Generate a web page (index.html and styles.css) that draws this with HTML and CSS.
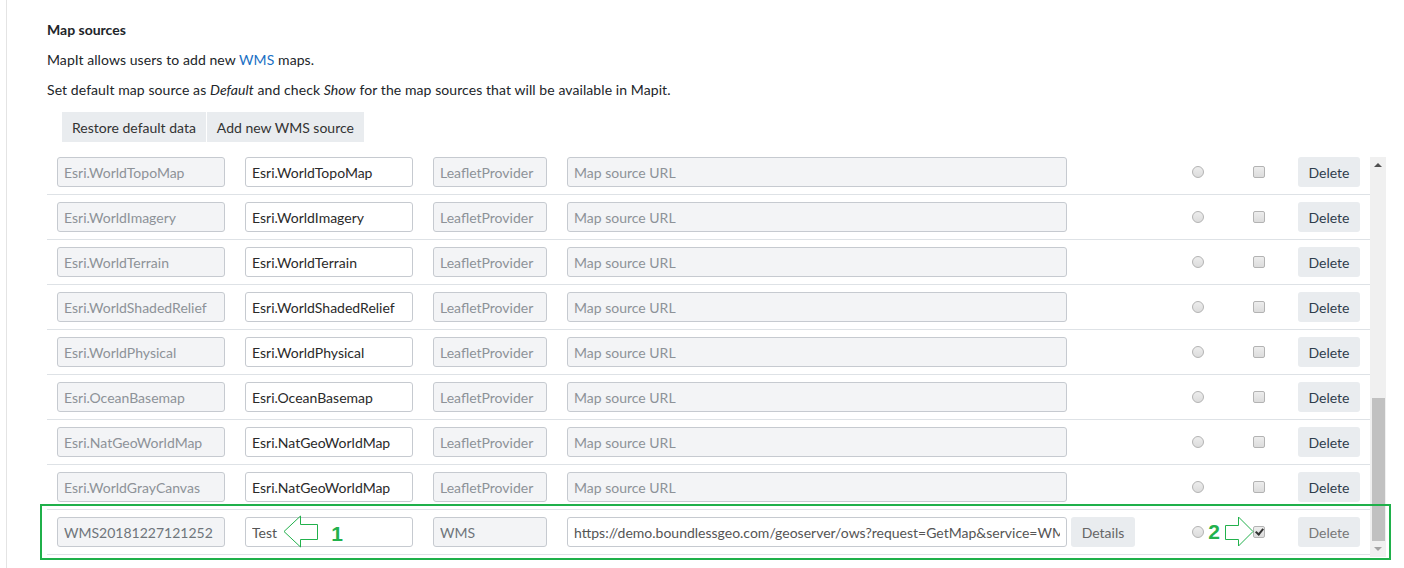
FILE: index.html
```html
<!DOCTYPE html>
<html lang="en">
<head>
    <meta charset="UTF-8">
    <meta name="viewport" content="width=device-width, initial-scale=1.0">
    <title>Map sources</title>
    <link rel="stylesheet" href="styles.css">
</head>
<body>

<div class="page">
    <h4 class="title">Map sources</h4>
    <p class="text">MapIt allows users to add new <a href="#" class="link">WMS</a> maps.</p>
    <p class="text">Set default map source as <em>Default</em> and check <em>Show</em> for the map sources that will be available in Mapit.</p>

    <div class="toolbar">
        <button type="button" class="tool-btn">Restore default data</button>
        <button type="button" class="tool-btn">Add new WMS source</button>
    </div>

    <div class="sources">
        <div class="list">
            <div class="list-inner">
                <div class="row">
                    <input class="field f-id locked" type="text" value="Esri.WorldTopoMap" disabled>
                    <input class="field f-name" type="text" value="Esri.WorldTopoMap">
                    <input class="field f-type locked" type="text" value="LeafletProvider" disabled>
                    <input class="field f-url locked" type="text" placeholder="Map source URL" disabled>
                    <span class="details-slot"></span>
                    <input class="radio" type="radio" name="default">
                    <input class="check" type="checkbox">
                    <button type="button" class="delete-btn">Delete</button>
                </div>
                <div class="row">
                    <input class="field f-id locked" type="text" value="Esri.WorldImagery" disabled>
                    <input class="field f-name" type="text" value="Esri.WorldImagery">
                    <input class="field f-type locked" type="text" value="LeafletProvider" disabled>
                    <input class="field f-url locked" type="text" placeholder="Map source URL" disabled>
                    <span class="details-slot"></span>
                    <input class="radio" type="radio" name="default">
                    <input class="check" type="checkbox">
                    <button type="button" class="delete-btn">Delete</button>
                </div>
                <div class="row">
                    <input class="field f-id locked" type="text" value="Esri.WorldTerrain" disabled>
                    <input class="field f-name" type="text" value="Esri.WorldTerrain">
                    <input class="field f-type locked" type="text" value="LeafletProvider" disabled>
                    <input class="field f-url locked" type="text" placeholder="Map source URL" disabled>
                    <span class="details-slot"></span>
                    <input class="radio" type="radio" name="default">
                    <input class="check" type="checkbox">
                    <button type="button" class="delete-btn">Delete</button>
                </div>
                <div class="row">
                    <input class="field f-id locked" type="text" value="Esri.WorldShadedRelief" disabled>
                    <input class="field f-name" type="text" value="Esri.WorldShadedRelief">
                    <input class="field f-type locked" type="text" value="LeafletProvider" disabled>
                    <input class="field f-url locked" type="text" placeholder="Map source URL" disabled>
                    <span class="details-slot"></span>
                    <input class="radio" type="radio" name="default">
                    <input class="check" type="checkbox">
                    <button type="button" class="delete-btn">Delete</button>
                </div>
                <div class="row">
                    <input class="field f-id locked" type="text" value="Esri.WorldPhysical" disabled>
                    <input class="field f-name" type="text" value="Esri.WorldPhysical">
                    <input class="field f-type locked" type="text" value="LeafletProvider" disabled>
                    <input class="field f-url locked" type="text" placeholder="Map source URL" disabled>
                    <span class="details-slot"></span>
                    <input class="radio" type="radio" name="default">
                    <input class="check" type="checkbox">
                    <button type="button" class="delete-btn">Delete</button>
                </div>
                <div class="row">
                    <input class="field f-id locked" type="text" value="Esri.OceanBasemap" disabled>
                    <input class="field f-name" type="text" value="Esri.OceanBasemap">
                    <input class="field f-type locked" type="text" value="LeafletProvider" disabled>
                    <input class="field f-url locked" type="text" placeholder="Map source URL" disabled>
                    <span class="details-slot"></span>
                    <input class="radio" type="radio" name="default">
                    <input class="check" type="checkbox">
                    <button type="button" class="delete-btn">Delete</button>
                </div>
                <div class="row">
                    <input class="field f-id locked" type="text" value="Esri.NatGeoWorldMap" disabled>
                    <input class="field f-name" type="text" value="Esri.NatGeoWorldMap">
                    <input class="field f-type locked" type="text" value="LeafletProvider" disabled>
                    <input class="field f-url locked" type="text" placeholder="Map source URL" disabled>
                    <span class="details-slot"></span>
                    <input class="radio" type="radio" name="default">
                    <input class="check" type="checkbox">
                    <button type="button" class="delete-btn">Delete</button>
                </div>
                <div class="row">
                    <input class="field f-id locked" type="text" value="Esri.WorldGrayCanvas" disabled>
                    <input class="field f-name" type="text" value="Esri.NatGeoWorldMap">
                    <input class="field f-type locked" type="text" value="LeafletProvider" disabled>
                    <input class="field f-url locked" type="text" placeholder="Map source URL" disabled>
                    <span class="details-slot"></span>
                    <input class="radio" type="radio" name="default">
                    <input class="check" type="checkbox">
                    <button type="button" class="delete-btn">Delete</button>
                </div>
                <div class="row row-wms">
                    <input class="field f-id locked" type="text" value="WMS20181227121252" disabled>
                    <input class="field f-name" type="text" value="Test">
                    <input class="field f-type locked" type="text" value="WMS" disabled>
                    <input class="field f-url" type="text" value="https://demo.boundlessgeo.com/geoserver/ows?request=GetMap&amp;service=WMS">
                    <span class="details-slot"><button type="button" class="details-btn">Details</button></span>
                    <input class="radio" type="radio" name="default">
                    <input class="check" type="checkbox" checked>
                    <button type="button" class="delete-btn muted">Delete</button>
                </div>
            </div>
        </div>

        <div class="scrollbar">
            <div class="sb-arrow"><span class="tri-up"></span></div>
            <div class="sb-track"><div class="sb-thumb"></div></div>
            <div class="sb-arrow"><span class="tri-down"></span></div>
        </div>

        <!-- annotation over the last row -->
        <svg class="note" width="1351" height="56" viewBox="0 0 1351 56">
            <rect x="1" y="1" width="1349" height="54" fill="none" stroke="#1fb04a" stroke-width="2"/>
            <polygon points="244,27.5 260.5,12 260.5,20.5 277.5,20.5 277.5,35.5 260.5,35.5 260.5,43" fill="none" stroke="#22b14c" stroke-width="1"/>
            <text x="297" y="37" class="note-num" text-anchor="middle">1</text>
            <text x="1174" y="35" class="note-num" text-anchor="middle">2</text>
            <polygon points="1185.5,21.5 1198.5,21.5 1198.5,13 1213,27.5 1198.5,42 1198.5,35.5 1185.5,35.5" fill="none" stroke="#22b14c" stroke-width="1"/>
        </svg>
    </div>
</div>

</body>
</html>
```

FILE: styles.css
```css
body {
    font-family: Lato, "Open Sans", sans-serif;
    font-size: 14px;
    color: #212529;
    background-color: #fff;
    margin: 0;
}
.page {
    margin-left: 6px;
    border-left: 1px solid #e4e4e4;
    padding: 20px 18px 0 40px;
    height: 548px;
}
.title {
    margin: 0 0 10px;
    font-size: 14px;
    line-height: 20px;
    font-weight: bold;
}
.text {
    margin: 0 0 10px;
    line-height: 20px;
    letter-spacing: 0.08px;
}
.link {
    color: #1a6fc4;
    text-decoration: none;
}
.toolbar {
    display: flex;
    gap: 1px;
    margin-top: 12px;
    padding-left: 15px;
}
.tool-btn {
    height: 30px;
    padding: 0 10px;
    border: none;
    background-color: #e9ecef;
    color: #333;
    font-family: inherit;
    font-size: 14px;
}
.sources {
    position: relative;
    display: flex;
    height: 400px;
    margin-top: 15px;
}
.list {
    flex: 1;
    overflow: hidden;
}
.list-inner {
    margin-top: -7px;
}
.row {
    display: flex;
    align-items: center;
    height: 45px;
    box-sizing: border-box;
    padding: 7px 0 7px 10px;
    border-bottom: 1px solid #dee2e6;
}
.field {
    box-sizing: border-box;
    height: 30px;
    padding: 0 6px;
    margin: 0 20px 0 0;
    border: 1px solid #c6cad0;
    border-radius: 3px;
    background-color: #fff;
    color: #2a2a2a;
    font-family: inherit;
    font-size: 14px;
}
.field.locked {
    background-color: #f3f4f6;
    color: #8d9298;
}
.field::placeholder {
    color: #8d9298;
}
.f-id, .f-name {
    width: 168px;
}
.f-type {
    width: 114px;
}
.f-url {
    width: 500px;
    margin-right: 0;
}
.row-wms .f-id, .row-wms .f-type {
    color: #6f757b;
}
.row-wms .f-name, .row-wms .f-url {
    color: #555;
}
.details-slot {
    display: flex;
    width: 68px;
    justify-content: flex-end;
}
.details-btn {
    width: 64px;
    height: 30px;
    border: none;
    border-radius: 3px;
    background-color: #e9ecef;
    color: #666;
    font-family: inherit;
    font-size: 14px;
}
.radio, .check {
    appearance: none;
    -webkit-appearance: none;
    box-sizing: border-box;
    width: 12px;
    height: 12px;
    margin: 0;
    border: 1px solid #b3b3b3;
    background: linear-gradient(#ededed, #dcdcdc);
}
.radio {
    margin-left: 57px;
    border-radius: 50%;
}
.check {
    position: relative;
    margin-left: 49px;
    border-radius: 2px;
}
.check:checked::after {
    content: "";
    position: absolute;
    left: 3px;
    top: 0;
    width: 3px;
    height: 6px;
    border-right: 2px solid #333;
    border-bottom: 2px solid #333;
    transform: rotate(40deg);
}
.delete-btn {
    width: 62px;
    height: 30px;
    margin-left: 33px;
    border: none;
    border-radius: 3px;
    background-color: #e9ecef;
    color: #2f3d4c;
    font-family: inherit;
    font-size: 14px;
}
.delete-btn.muted {
    color: #777;
}
.scrollbar {
    display: flex;
    flex-direction: column;
    width: 16px;
    background-color: #f0f0f0;
}
.sb-arrow {
    display: flex;
    height: 16px;
    align-items: center;
    justify-content: center;
}
.tri-up {
    border-left: 4px solid transparent;
    border-right: 4px solid transparent;
    border-bottom: 4px solid #505050;
}
.tri-down {
    border-left: 4px solid transparent;
    border-right: 4px solid transparent;
    border-top: 4px solid #a3a3a3;
}
.sb-track {
    flex: 1;
    display: flex;
    flex-direction: column;
    justify-content: flex-end;
}
.sb-thumb {
    height: 143px;
    margin: 0 1px 0 2px;
    background-color: #c1c1c1;
}
.note {
    position: absolute;
    left: -7px;
    top: 347px;
    overflow: visible;
    pointer-events: none;
}
.note-num {
    font-family: "Liberation Sans", Arial, sans-serif;
    font-size: 21px;
    font-weight: bold;
    fill: #22b14c;
}
```
